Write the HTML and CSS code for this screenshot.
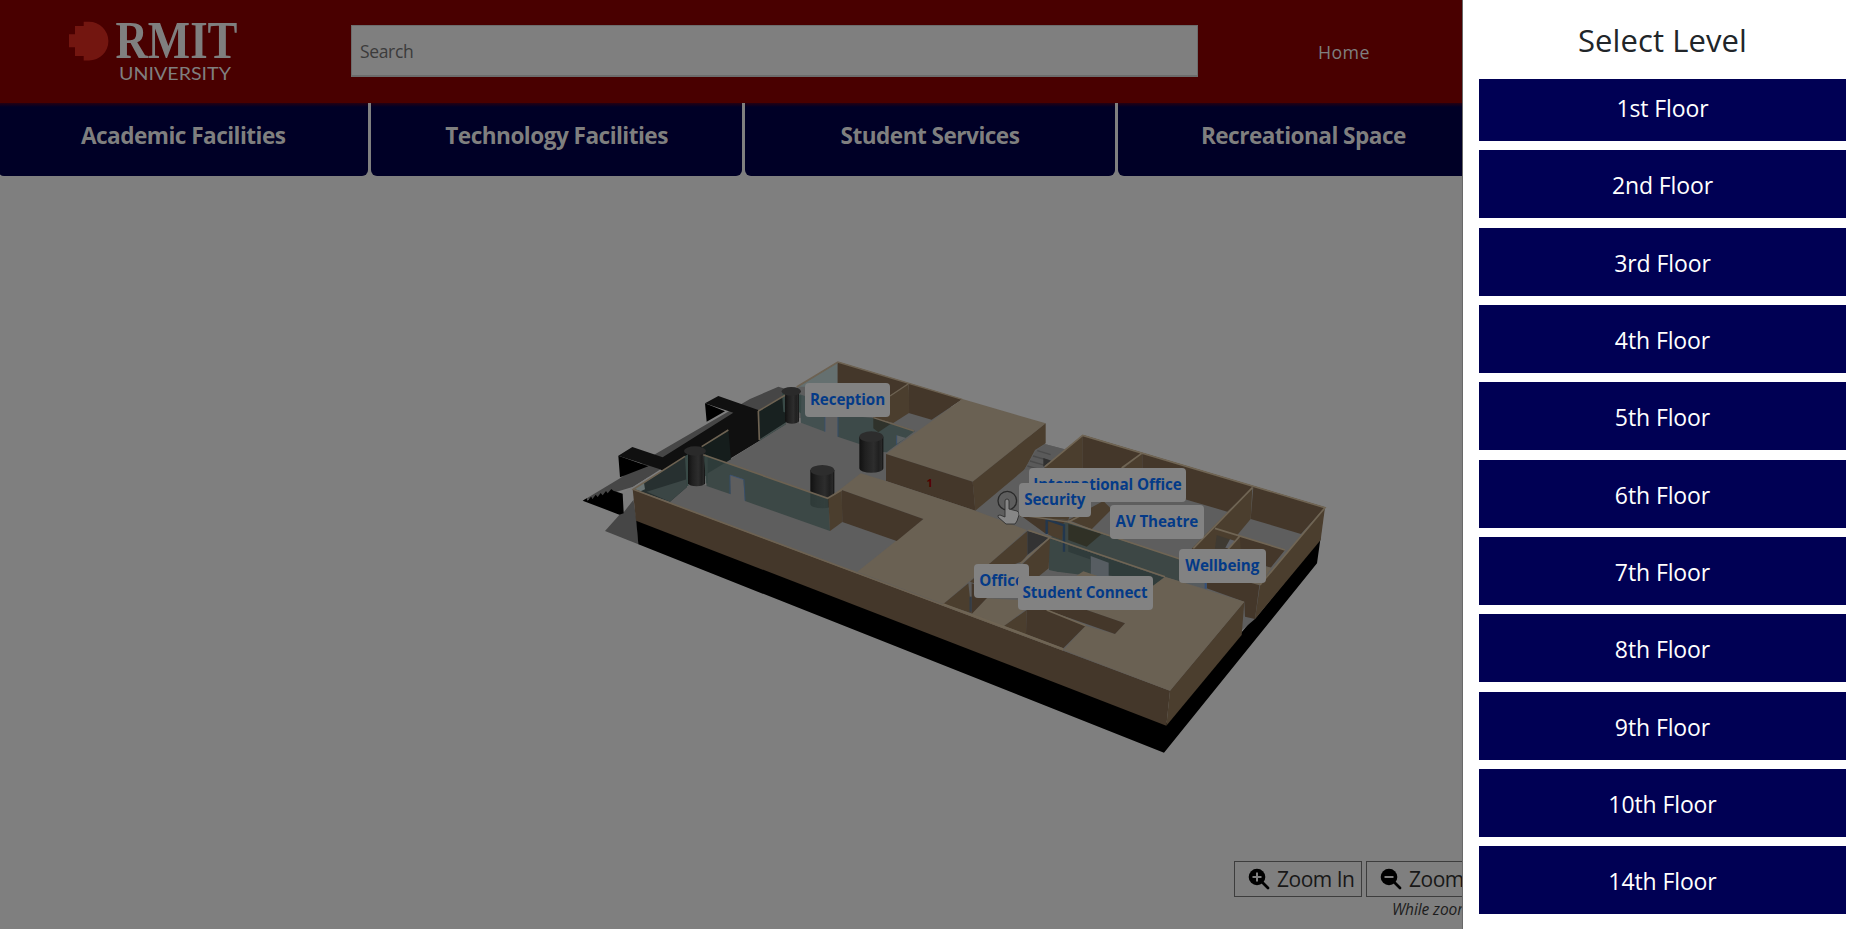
FILE: index.html
```html
<!DOCTYPE html>
<html lang="en">
<head>
<meta charset="utf-8">
<title>RMIT University – Campus Map</title>
<link rel="stylesheet" href="styles.css">
</head>
<body>
<div class="app">
<div class="page">
  <header class="topbar">
    <svg class="logo" width="190" height="80" viewBox="0 0 190 80">
      <path fill="#731610" d="M33.7 1.7H39a19.3 19.3 0 0 1 0 38.8H33.7V36H25v-8.700H19V14.300h6V6h8.700z"/>
      <text class="logo-name" x="65.500" y="38" textLength="122" lengthAdjust="spacingAndGlyphs">RMIT</text>
      <text class="logo-sub" x="69" y="60" textLength="112" lengthAdjust="spacingAndGlyphs">UNIVERSITY</text>
    </svg>
    <div class="search">Search</div>
    <a class="home">Home</a>
  </header>
  <nav class="tabs">
    <a class="tab">Academic Facilities</a>
    <a class="tab">Technology Facilities</a>
    <a class="tab">Student Services</a>
    <a class="tab">Recreational Space</a>
  </nav>
  <main class="viewer">
    <svg class="model" width="1463" height="753" viewBox="0 176 1463 753">
      <g transform="translate(570 350) scale(.333333)">
        <!-- entrance ramp and stairs -->
        <path fill="#464646" d="M38 452 150 385 255 313 540 147 625 110 665 122 560 190 300 340 190 410 130 428z"/>
        <path fill="#464646" d="M105 543 190 448 200 512 205 583z"/>
        <path fill="#7c7c7c" d="M158 430 235 382 260 378 190 450 160 488z"/>
        <path fill="#000" d="M38 452 50 445 53 452 63 440 68 446 77 434 83 441 92 429 98 436 108 423 113 430 124 417 130 422 158 431 161 490 148 494z"/>
        <path fill="#101010" d="M405 160 445 138 565 180 569 272 350 405 270 358 145 317 187 291 278 322 490 188z"/>
        <path fill="#000" d="M405 160 465 184 410 215zM145 317 235 349 150 382z"/>
        <!-- plinth -->
        <path fill="#000" d="M198 505 205 583 1782 1208 2241 640 2252 562 1788 1120z"/>
        <!-- floor slab -->
        <path fill="#5e5e5e" d="M190 418 350 365 480 328 569 272 645 135 803 35 1427 283 1485 298 1540 255 2265 472 2240 580 2055 807 1800 1022z"/>
        <!-- entrance glazing -->
        <path fill="#273030" d="M190 418 350 318 350 412 300 455z"/>
        <path fill="#3b4645" d="M230 425 350 388 350 412 300 455z"/>
        <path fill="#697373" d="M190 416 222 398 225 418 212 424z"/>
        <path fill="#151d1c" d="M395 290 475 240 483 328 410 372z"/>
        <path fill="#182120" d="M563 182 645 135 648 222 568 272z"/>
        <path fill="#475250" d="M569 268 648 217 648 223 569 272z"/>
        <path fill="#657070" d="M675 117 803 37V110H690z"/>
        <path fill="#435050" d="M688 132 765 160V245L693 218z"/>
        <path fill="#3d4a49" d="M803 195 905 203 1035 243 950 307 940 306 803 260z"/>
        <path fill="#5e6263" d="M980 256 1008 264 980 282z"/>
        <path fill="none" stroke="#34507a" stroke-width="2" d="M765 195V245M804 195V260M980 284V256"/>
        <!-- back rooms -->
        <path fill="#44372a" d="M803 35 1177 148 1085 209 1016 189V103L960 140V110H803z"/>
        <path fill="#4b3e2e" d="M1016 103 1018 188 970 219 910 204 910 170 960 135z"/>
        <path fill="#2f322b" d="M910 203 965 220 925 247 910 235z"/>
        <path fill="none" stroke="#6d6252" stroke-width="4" d="M803 36 1177 148M1014 102 960 138M910 203 1032 243"/>
        <!-- columns -->
        <g>
          <path fill="#384946" d="M636 128H650V190L640 185zM684 133 694 137 693 190 686 186zM345 318 355 312 355 408 350 408zM404 312 413 318 413 400 405 400z"/>
          <path fill="url(#col)" d="M645 122V214a22 10 0 0 0 42 0V122z"/><ellipse cx="664" cy="124" rx="29" ry="13" fill="#2a2a2a"/>
          <path fill="url(#col)" d="M354 302V400a26 11 0 0 0 51 0V302z"/><ellipse cx="375" cy="303" rx="33" ry="14" fill="#2a2a2a"/>
          <path fill="url(#col)" d="M721 360V462a36 13 0 0 0 72 0V360z"/><ellipse cx="757" cy="361" rx="36" ry="16" fill="#2d2d2d"/>
          <path fill="url(#col)" d="M868 260V355a36 13 0 0 0 72 0V260z"/><ellipse cx="904" cy="260" rx="36" ry="16" fill="#2d2d2d"/>
        </g>
        <path fill="#7f7f7f" opacity=".6" d="M687 204h5v16h-5zM405 378h4v27h-4z"/>
        <!-- front glass wall -->
        <path fill="#354341" fill-opacity=".82" d="M400 314 775 445 780 543 525 453 520 388 480 374 482 433 410 408z"/>
        <path fill="none" stroke="#34507a" stroke-width="2" d="M480 432 480 375 522 389 525 452"/>
        <!-- tall block -->
        <path fill="#6a6153" d="M1177 147 1427 220 1208 395 948 312z"/>
        <path fill="#44372a" d="M948 312 1208 395 1216 482 948 393z"/>
        <path fill="#4b3e2e" d="M1208 395 1427 220V280L1395 300 1364 358 1216 482z"/>
        <!-- stair flight -->
        <path fill="#5a5a5a" d="M1400 300 1427 283 1483 298 1415 355 1362 360z"/>
        <path stroke="#4a4a4a" stroke-width="4" d="M1402 302 1442 314M1389 318 1435 331M1380 333 1425 346M1372 348 1400 356"/>
        <path fill="#303030" d="M1420 324 1444 332 1420 350z"/>
        <!-- central roof -->
        <path fill="#6a6153" d="M872 370 948 393 1216 482 1370 540 1260 640 1120 762 862 665 1060 507 815 420 775 446z"/>
        <path fill="#4b3e2e" d="M775 446 815 420 817 516 780 543z"/>
        <path fill="#44372a" d="M815 420 1060 507 980 573 817 516z"/>
        <!-- outer walls -->
        <path fill="#44372a" d="M188 418 198 512 1789 1127 1800 1022z"/>
        <path fill="#4b3e2e" d="M1800 1022 1789 1127 2015 855 2023 755z"/>
        <path fill="none" stroke="#6d6252" stroke-width="5" d="M400 314 773 445 815 420M345 319 190 418 1480 900M565 183 645 136M395 290 475 240M680 111 803 37M565 183 568 270"/>
      </g>
      <g transform="translate(1000 400) scale(.333333)">
        <!-- east rooms -->
        <path fill="#4b3e2e" d="M248 105 248 205 205 360 60 350 60 310 135 200z"/>
        <path fill="#44372a" d="M248 105 975 322 903 402 752 357 760 262 682 335 427 260V162L340 225 248 215z"/>
        <path fill="#4b3e2e" d="M427 160V225H345zM757 262 752 357 712 405 645 385 600 460 575 446zM205 360 310 303 335 328 275 388z"/>
        <path fill="#44372a" d="M60 345 205 362 190 400 135 400zM650 388 855 450 812 503 720 470 720 412 690 445 650 440z"/>
        <path fill="#4b3e2e" d="M645 385 720 410 685 450 590 450z"/>
        <path fill="#3f3a32" d="M650 405 695 420 680 446 645 446z"/>
        <path fill="#606267" d="M690 418 708 424 688 446 676 443z"/>
        <path fill="#4b3e2e" d="M720 410 722 448 685 448z"/>
        <path fill="#6a6153" d="M795 500 815 503 778 556 735 545z"/>
        <path fill="#44372a" d="M620 540 740 545 778 556 765 657 735 650 733 605 620 565z"/>
        <path fill="#4b3e2e" d="M975 322 962 420 765 657 780 555z"/>
        <path fill="#565b5e" d="M545 540 620 545V568L560 550z"/>
        <path stroke="#34507a" stroke-width="6" d="M617 545V566"/>
        <!-- lobby glass -->
        <path fill="#3d4745" d="M195 365 540 477 560 550 490 530 150 415z"/>
        <path fill="#303126" d="M205 372 305 402 260 440 205 420z"/>
        <path fill="#303c3b" d="M148 415 495 533 458 570 420 535 148 512z"/>
        <path fill="#3b4745" d="M148 415 205 435V455L270 478 272 528 148 512z"/>
        <path fill="#575d62" d="M272 468 326 488V530H272z"/>
        <path fill="#5e5e5e" d="M148 510 225 529H120z"/>
        <path fill="#6a6153" d="M250 514 300 530H225z"/>
        <path fill="#4b3e2e" d="M145 363 190 378 186 420 145 404z"/>
        <path fill="none" stroke="#22374e" stroke-width="7" d="M140 402V358L192 376V455"/>
        <path fill="#4b3e2e" d="M82 393 82 465 65 485 -70 530 -30 490z"/>
        <path fill="#333" d="M82 393 148 412 82 465z"/>
        <path fill="#4b3e2e" d="M150 414 146 505 115 530H70V490z"/>
        <!-- south roof and rooms -->
        <path fill="#6a6153" d="M495 530 733 605 510 872 190 750 257 677 345 702 375 670 260 630 455 560z"/>
        <path fill="#6a6153" d="M-85 642-40 595 60 600 75 630 12 678z"/>
        <path fill="#4b3e2e" d="M-170 612-95 550-85 640zM12 678 80 630 78 703z"/>
        <path fill="#44372a" d="M-85 550-10 580-40 595-85 642zM80 630 140 630 257 677 190 745 78 703zM140 630 260 630 375 670 345 702z"/>
        <path fill="#4b3e2e" d="M-90 545-30 490 20 490 0 580z"/>
        <path stroke="#353c44" stroke-width="7" d="M-88 590V635"/>
        <g fill="none" stroke="#706554" stroke-width="5">
          <path d="M135 200 248 106 975 323 780 555M425 160 365 204M758 262 580 445M645 385 855 450M718 410 685 447M60 345 205 366 540 477M245 345 205 366M85 391 495 530M148 414 62 490M140 630 257 677M-170 612 190 747"/>
        </g>
      </g>
      <text class="floor-mark" x="926.500" y="487">1</text>
      <circle cx="1007.300" cy="500.700" r="9.300" fill="none" stroke="#292929" stroke-width="1.300"/>
      <path fill="#868686" stroke="#303030" stroke-width=".9" d="M1005 501a2 2 0 0 1 4 0v8l8 2q2.500 1 2 4l-2 6-2 3h-9l-8-7q-1-2 2-2l5 2z"/>
      <defs><linearGradient id="col"><stop offset="0" stop-color="#111"/><stop offset=".25" stop-color="#202020"/><stop offset=".6" stop-color="#2d2d2d"/><stop offset=".8" stop-color="#202020"/><stop offset=".93" stop-color="#292929"/><stop offset="1" stop-color="#0c0c0c"/></linearGradient></defs>
    </svg>
    <span class="label reception">Reception</span>
    <span class="label international">International Office</span>
    <span class="label security">Security</span>
    <span class="label theatre">AV Theatre</span>
    <span class="label wellbeing">Wellbeing</span>
    <span class="label office">Office</span>
    <span class="label connect">Student Connect</span>
    <div class="controls">
      <div class="zoom-row">
        <button class="zoom"><svg width="22" height="22" viewBox="0 0 22 22"><path d="M13.500 13.500 20 20" stroke="#000" stroke-width="2.800" stroke-linecap="round"/><circle cx="9" cy="9" r="8.300"/><path d="M4.500 9h9M9 4.500v9" stroke="#7f7f7f" stroke-width="2"/></svg><span>Zoom In</span></button>
        <button class="zoom"><svg width="22" height="22" viewBox="0 0 22 22"><path d="M13.500 13.500 20 20" stroke="#000" stroke-width="2.800" stroke-linecap="round"/><circle cx="9" cy="9" r="8.300"/><path d="M4.500 9h9" stroke="#7f7f7f" stroke-width="2"/></svg><span>Zoom Out</span></button>
      </div>
      <p class="hint">While zooming</p>
    </div>
  </main>
</div>
<aside class="levels">
  <h2 class="levels-title">Select Level</h2>
  <button class="level first">1st Floor</button>
  <button class="level">2nd Floor</button>
  <button class="level">3rd Floor</button>
  <button class="level">4th Floor</button>
  <button class="level">5th Floor</button>
  <button class="level">6th Floor</button>
  <button class="level">7th Floor</button>
  <button class="level">8th Floor</button>
  <button class="level">9th Floor</button>
  <button class="level">10th Floor</button>
  <button class="level">14th Floor</button>
</aside>
</div>
</body>
</html>
```
FILE: styles.css
```css
* { box-sizing: border-box; }
body { margin: 0; overflow: hidden; font-family: "Open Sans", "Noto Sans", sans-serif; }
button { font-family: inherit; margin: 0; padding: 0; border: 0; border-radius: 0; }
.app { display: flex; width: 1859px; height: 929px; background: #fff; }
.page { width: 1463px; height: 929px; overflow: hidden; background: #7f7f7f; border-right: 1px solid #686868; }

.topbar { display: flex; align-items: flex-start; height: 103px; padding: 20px 0 0 50px; margin-right: -1px; background: #490000; }
.logo { flex: none; overflow: visible; }
.logo-name { font: bold 52px "Liberation Serif", serif; fill: #7f7f7f; }
.logo-sub { font: 18px Lato, sans-serif; fill: #7f7f7f; }
.search { flex: none; width: 847px; height: 52px; margin: 5px 0 0 111px; padding-left: 8px; background: #7f7f7f; border: 1px solid #6c6c6c; border-bottom-width: 2px; line-height: 51px; font-size: 17.5px; letter-spacing: -.35px; color: #3b3b3b; }
.home { margin: 19px 0 0 120px; font-size: 17.8px; line-height: 26px; letter-spacing: .4px; color: #7f7f7f; }

.tabs { display: flex; gap: 3px; height: 73px; margin-left: -2px; }
.tab { flex: none; width: 370.4px; height: 73px; padding-top: 17px; text-align: center; font-size: 22.6px; font-weight: 700; line-height: 32px; letter-spacing: -.53px; color: #7f7f7f; background: linear-gradient(#250012, #000026 4px); border-radius: 0 0 6px 6px; }

.viewer { position: relative; height: 753px; }
.model { display: block; }
.floor-mark { font: bold 11px "Open Sans", sans-serif; fill: #560000; }
.label { position: absolute; height: 34px; line-height: 33px; border-radius: 4px; background: #828282; color: #043a87; font-size: 15.2px; font-weight: 700; text-align: center; white-space: nowrap; letter-spacing: -.1px; }
.reception { left: 805px; top: 206.5px; width: 85px; }
.international { left: 1029px; top: 291.500px; width: 157px; }
.security { left: 1019px; top: 306.500px; width: 71.500px; }
.theatre { left: 1110px; top: 328.500px; width: 93.500px; }
.wellbeing { left: 1179px; top: 372.500px; width: 86.500px; }
.office { left: 974px; top: 387.500px; width: 55px; }
.connect { left: 1017.500px; top: 400.400px; width: 135px; }

.controls { position: absolute; left: 1234px; top: 685px; width: 260px; }
.zoom-row { display: flex; gap: 4px; }
.zoom { flex: none; display: flex; align-items: center; gap: 7px; height: 36px; padding-left: 13px; width: 128px; border: 1px solid #3d3d3d; background: transparent; font-size: 21px; font-weight: 400; color: #181818; white-space: nowrap; letter-spacing: -.5px; }
.zoom svg { flex: none; }
.hint { margin: 0 0 0 158px; font-size: 15.5px; line-height: 25px; font-style: italic; color: #1c1c1c; white-space: nowrap; letter-spacing: -.1px; }

.levels { display: flex; flex-direction: column; gap: 9.333px; width: 396px; padding: 19px 13px 0 16px; background: #fff; }
.levels-title { margin: 0; height: 50.667px; text-align: center; font-size: 31px; line-height: 42px; font-weight: 500; letter-spacing: .1px; color: #212529; }
.level { flex: none; height: 68px; background: #000054; color: #fff; font-size: 23px; line-height: 32px; text-align: center; letter-spacing: -.1px; padding-top: 2px; }
.level.first { height: 62px; padding: 0 0 3px; }
```
